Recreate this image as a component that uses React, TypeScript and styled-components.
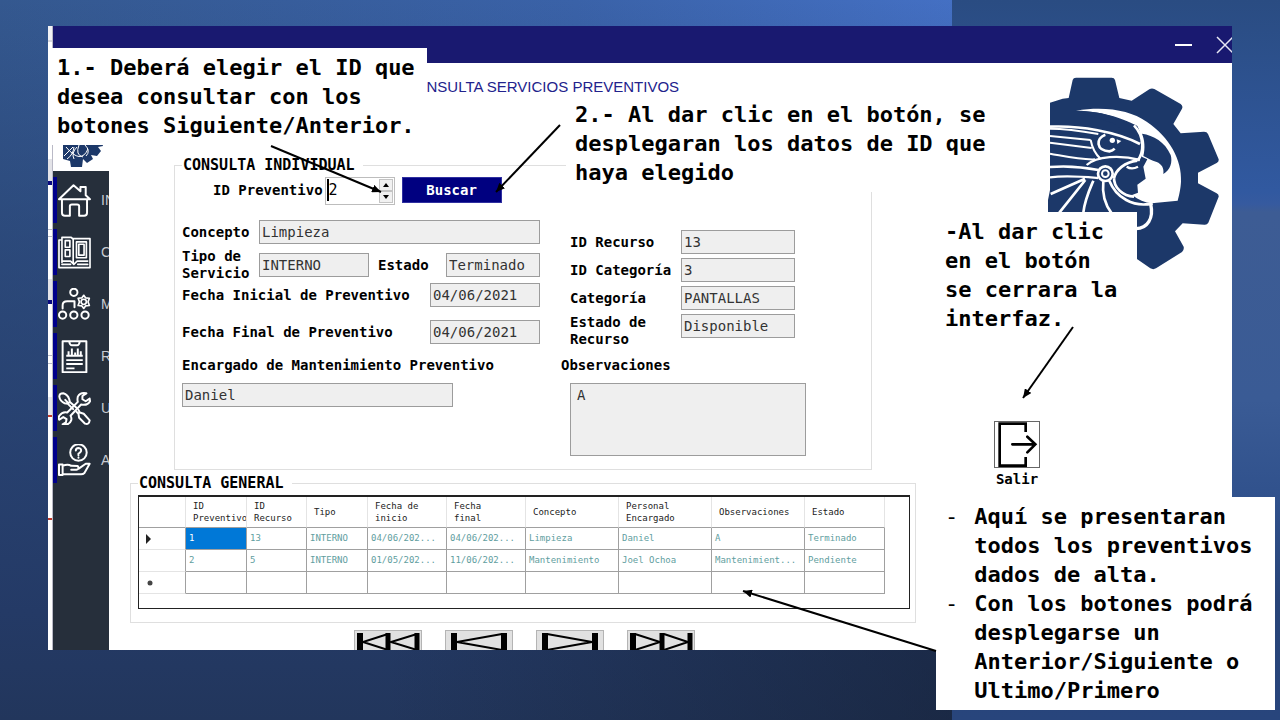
import React from 'react';
import styled, { createGlobalStyle } from 'styled-components';

const MONO = '"DejaVu Sans Mono", "Liberation Mono", monospace';

const GlobalStyle = createGlobalStyle`
  * { box-sizing: border-box; }
  body { margin: 0; font-family: ${MONO}; color: #000; }
  button, input, textarea { font-family: inherit; margin: 0; }
`;

const Slide = styled.div`
  position: relative;
  min-height: 100vh;
  padding: 26px 48px 70px;
  overflow: hidden;
  background:
    linear-gradient(to right, rgba(20, 30, 50, 0) 30%, rgba(20, 30, 50, 0.55) 74%) 0 100% / 100% 70px no-repeat,
    linear-gradient(to bottom, rgba(29, 47, 82, 0) 0%, rgba(33, 54, 96, 0.45) 35%, #243a66 85%, #22365c 100%),
    linear-gradient(to right, #34588f 0%, #3a62a8 45%, #4470c4 75%);
`;

const SideBand = styled.div`
  position: absolute;
  top: 0;
  right: 0;
  bottom: 0;
  left: 952px;
  background: linear-gradient(to bottom, #2a4c82 0, #3159a0 190px, #365a9f 204px, #3d5c94 212px, #3a5b95 400px, #30518c 500px, #284478 600px, #28457c 100%);
`;

const Screen = styled.div`
  position: relative;
  display: flex;
  background: #fff;
`;

const Backdrop = styled.div`
  flex: 0 0 5px;
  border-right: 1px solid #b9b9c6;
  background: linear-gradient(
    to bottom,
    #f2f2f5 0 14px, #d8d8de 14px 16px, #fff 16px 133px,
    #e3e3e8 133px 155px, #0a0a80 155px 159px, #fff 159px 203px,
    #b8bac8 203px 204px, #fff 204px 210px, #b8bac8 210px 211px, #fff 211px 253px,
    #e3e3e8 253px 274px, #0a0a80 274px 278px, #fff 278px 329px,
    #b8bac8 329px 330px, #fff 330px 337px, #b8bac8 337px 338px, #fff 338px 371px,
    #e8e8ec 371px 389px, #c0392b 389px 391px, #fff 391px 492px,
    #c0392b 492px 494px, #fff 494px
  );
`;

const Windowed = styled.div`
  flex: 1;
  min-width: 0;
`;

const TitleBar = styled.header`
  display: flex;
  justify-content: flex-end;
  align-items: center;
  gap: 24px;
  height: 37px;
  background: #191970;
  overflow: hidden;
`;

const TitleButton = styled.button`
  display: flex;
  padding: 0;
  border: 0;
  background: none;
  flex: none;
  &:last-child { width: 16px; }
`;

const Body = styled.div`
  display: flex;
`;

const Sidebar = styled.nav`
  flex: 0 0 56px;
  min-width: 0;
  display: flex;
  flex-direction: column;
  overflow: hidden;
`;

const SidebarLogo = styled.div`
  display: flex;
  align-items: flex-end;
  height: 108px;
  padding: 0 0 4px 10px;
`;

const Menu = styled.div`
  flex: 1;
  display: flex;
  flex-direction: column;
  gap: 6px;
  padding-top: 6px;
  background: #262f3b;
`;

const MenuItem = styled.a`
  display: flex;
  align-items: center;
  gap: 10px;
  height: 46px;
  padding-left: 1px;
  border-left: 4px solid #00008b;
  overflow: hidden;
  white-space: nowrap;
  text-decoration: none;
  color: #c9ccd2;
  font: 14px "Liberation Sans", sans-serif;
  svg { flex: none; }
`;

const Main = styled.main`
  flex: 1;
  min-width: 0;
  display: grid;
  grid-template-columns: minmax(0, 1fr) 286px;
`;

const Content = styled.div`
  padding: 14px 30px 0 21px;
`;

const Heading = styled.h1`
  margin: 0 0 58px;
  padding-left: 274px;
  font: 15px/20px "Liberation Sans", sans-serif;
  color: #22228c;
`;

const Group = styled.fieldset<{ $inset?: boolean }>`
  min-width: 0;
  margin: ${p => (p.$inset ? '0 44px 3px' : '0')};
  padding: ${p => (p.$inset ? '2px 7px 13px' : '2px 5px 13px 7px')};
  border: 1px solid #dfdfdf;
`;

const Legend = styled.legend`
  padding: 0 8px 0 1px;
  font-size: 15px;
  line-height: 20px;
  font-weight: 700;
`;

const SearchRow = styled.div`
  display: flex;
  align-items: flex-start;
  padding-left: 31px;
  margin-bottom: 15px;
`;

const Label = styled.label<{ $width?: number; $indent?: number }>`
  flex: none;
  width: ${p => (p.$width ? `${p.$width}px` : 'auto')};
  padding-left: ${p => p.$indent ?? 0}px;
  font-size: 14px;
  line-height: 17px;
  font-weight: 700;
`;

const SearchLabel = styled(Label)`
  line-height: 26px;
`;

const Stepper = styled.div`
  display: flex;
  width: 70px;
  height: 28px;
  margin: 0 7px 0 2px;
  padding: 1px;
  border: 1px solid #bdbdbd;
`;

const StepperInput = styled.input`
  flex: 1;
  min-width: 0;
  height: 22px;
  padding: 0;
  border: 0;
  border-left: 2px solid #000;
  font-size: 15px;
  appearance: textfield;
  &::-webkit-inner-spin-button { appearance: none; }
`;

const StepperArrows = styled.div`
  display: flex;
  flex-direction: column;
  width: 14px;
`;

const ArrowButton = styled.button`
  flex: 1;
  display: flex;
  align-items: center;
  justify-content: center;
  padding: 0;
  border: 1px solid #c4c4c4;
  background: #f1f1f1;
`;

const SearchButton = styled.button`
  width: 100px;
  height: 26px;
  padding: 0;
  border: 1px solid #3030a0;
  background: #000080;
  color: #fff;
  font-size: 14px;
  font-weight: 700;
`;

const Columns = styled.div`
  display: flex;
  gap: 21px;
`;

const Column = styled.div<{ $width: number }>`
  flex: 0 0 ${p => p.$width}px;
`;

const ResourceFields = styled.div`
  display: flex;
  flex-direction: column;
  gap: 4px;
  padding: 10px 11px 9px 9px;
`;

const Row = styled.div<{ $after?: number; $top?: boolean }>`
  display: flex;
  align-items: ${p => (p.$top ? 'flex-start' : 'center')};
  justify-content: space-between;
  margin-bottom: ${p => p.$after ?? 0}px;
`;

const Field = styled.input<{ $width: number }>`
  flex: none;
  width: ${p => p.$width}px;
  height: 24px;
  padding: 0 2px;
  border: 1px solid #9c9c9c;
  background: #efefef;
  color: #333;
  font-size: 14px;
`;

const Caption = styled(Label)`
  display: block;
  margin-bottom: 9px;
`;

const Notes = styled.textarea`
  display: block;
  width: 236px;
  height: 73px;
  margin-left: 9px;
  padding: 3px 6px;
  border: 1px solid #9c9c9c;
  background: #efefef;
  color: #333;
  font-size: 14px;
  resize: none;
`;

const TablePanel = styled.div`
  padding: 0 0 14px;
  border: 1px solid #222;
  border-top-width: 2px;
`;

const Table = styled.table`
  width: 745px;
  table-layout: fixed;
  border-collapse: separate;
  border-spacing: 0;
  font-size: 9px;
`;

const HeadCell = styled.th`
  height: 31px;
  padding: 0 0 0 7px;
  border-right: 1px solid #e4e4e4;
  border-bottom: 1px solid #a0a0a0;
  line-height: 12px;
  font-weight: 400;
  text-align: left;
  white-space: pre-line;
  color: #222;
  overflow: hidden;
`;

const Cell = styled.td<{ $selected?: boolean }>`
  height: 22px;
  padding: 0 0 2px 3px;
  border-right: 1px solid #a0a0a0;
  border-bottom: 1px solid #a0a0a0;
  background: ${p => (p.$selected ? '#0078d7' : '#fff')};
  color: ${p => (p.$selected ? '#fff' : '#5f9ea0')};
  white-space: nowrap;
  overflow: hidden;
`;

const RowMark = styled.th`
  height: 22px;
  padding: 0 0 0 6px;
  border-right: 1px solid #a0a0a0;
  border-bottom: 1px solid #e4e4e4;
  text-align: left;
  svg { display: block; }
`;

const Pager = styled.div`
  display: flex;
  gap: 23px;
  height: 20px;
  margin-top: 7px;
  padding-left: 224px;
  overflow: hidden;
`;

const PagerButton = styled.button`
  flex: none;
  width: 68px;
  height: 24px;
  padding: 0;
  border: 1px solid #b4b4b4;
  background: #e1e1e1;
  svg { display: block; margin: -1px; }
`;

const Aside = styled.aside`
  padding-top: 14px;
`;

const Emblem = styled.div`
  height: 193px;
  margin: 0 0 151px 102px;
`;

const Exit = styled.div`
  display: flex;
  flex-direction: column;
  align-items: center;
  gap: 3px;
  width: 46px;
  margin-left: 48px;
`;

const ExitButton = styled.button`
  width: 46px;
  height: 47px;
  padding: 0;
  border: 1px solid #666;
  background: #fff;
  svg { display: block; }
`;

const Callout = styled.div<{ $x: number; $y: number; $w: number }>`
  position: absolute;
  left: ${p => p.$x}px;
  top: ${p => p.$y}px;
  width: ${p => p.$w}px;
  padding: 5px 9px;
  background: #fff;
  font-size: 22px;
  line-height: 29px;
  font-weight: 700;
  white-space: nowrap;
  p, ul { margin: 0; padding: 0; }
  ul { list-style: none; }
  li { display: flex; gap: 16px; }
`;

const Dash = styled.span`
  font-weight: 400;
`;

const Arrows = styled.svg`
  position: absolute;
  left: 0;
  top: 0;
  width: 100%;
  height: 100%;
  pointer-events: none;
`;

const NAVY = '#1c3869';

function Logo({ width, height }: { width: number; height: number }) {
  return (
    <svg width={width} height={height} viewBox="54 51 516 579" fill="none" stroke="#fff" strokeWidth="6" strokeLinecap="butt">
      <path stroke="none" fill={NAVY} d="M60 128 L98 116 L116 114 L128 60 Q130 53 138 53 L245 53 Q253 53 255 60 L268 114 L305 122 L358 88 Q365 83 373 87 L452 132 Q460 138 456 146 L430 192 L452 220 L522 215 Q531 215 534 222 L566 298 Q567 305 560 309 L504 338 V370 L560 400 Q567 404 566 410 L535 488 Q531 495 523 494 L458 490 L435 514 L461 560 Q463 570 456 576 L378 625 Q370 630 361 625 L322 598 H54 V420 L60 390 Z" />
      <path stroke="none" fill="#fff" d="M138 152 C230 138 300 152 350 185 C420 232 456 300 453 365 C452 385 447 408 443 422 L365 430 C345 428 325 420 306 405 L324 398 L322 374 L347 356 L340 320 L352 298 L335 290 L332 222 C300 180 220 152 138 152Z" />
      <path stroke="none" fill={NAVY} d="M138 153 C220 152 290 180 322 198 C336 222 336 262 328 290 L300 296 L300 230 L250 190Z" />
      <path stroke="none" fill={NAVY} d="M336 221 C370 226 405 245 422 285 C428 305 422 330 400 342 C403 325 395 312 380 306 C365 302 352 294 340 288 C346 265 344 240 336 221Z" />
      <path d="M60 200 C150 196 260 215 330 252 M312 196 C345 230 342 280 322 302" strokeWidth="8" />
      <path d="M60 206 C110 206 160 214 205 222 M60 228 L182 240 M60 248 L185 264 M60 281 C110 290 150 300 195 298 M182 240 C186 262 196 282 212 297" strokeWidth="6" />
      <path d="M170 315 C200 288 270 284 330 300 M60 321 C110 317 165 322 205 330 M60 352 C110 345 160 350 205 354" strokeWidth="7" />
      <path d="M226 224 C196 235 198 272 238 274 Q248 272 254 266" strokeWidth="8" />
      <circle cx="247" cy="241" r="8" fill="#fff" stroke="none" />
      <path d="M260 238 L274 243 L262 252Z" fill="#fff" stroke="none" />
      <path d="M165 356 L62 402 M166 360 L88 458 M190 362 C178 390 164 420 160 458 M220 364 C216 400 226 435 245 460 M238 362 C258 412 310 444 368 430 M252 356 C256 330 285 306 322 302 M252 350 C250 385 280 408 312 410" strokeWidth="8" />
      <path d="M290 320 Q305 330 324 320" strokeWidth="7" />
      <path d="M362 432 C372 475 352 506 318 506" strokeWidth="10" />
      <circle cx="226" cy="341" r="22" fill={NAVY} strokeWidth="8" />
      <circle cx="226" cy="341" r="10" strokeWidth="6" />
    </svg>
  );
}

function MiniLogo() {
  return (
    <svg width="40" height="42" viewBox="0 0 40 42" fill="none" stroke="#fff" strokeWidth="1">
      <path fill={NAVY} stroke="none" d="M0 34 L0 8 L6 6 L8 0 H18 L20 6 L26 3 L32 8 L30 13 L38 14 L40 21 L35 22 L38 26 L34 31 L28 30 L30 34 L24 38 L20 34 L19 42 H8 L7 36Z" />
      <path d="M1 31 L10 22 M4 34 Q10 30 11 22 M11 34 Q8 28 14 22 M20 32 Q12 30 16 20 M23 31 Q28 26 22 20 M3 22 Q18 40 25 24" />
    </svg>
  );
}

const iconProps = { width: 33, height: 33, viewBox: '0 0 100 100', fill: 'none', stroke: '#fff', strokeWidth: 6, strokeLinejoin: 'round' as const, strokeLinecap: 'round' as const };

const menu = [
  {
    text: 'IN',
    icon: <svg {...iconProps}><path d="M3 46 L47 4 L68 22 V9 H84 V34 L97 46 Z M12 47 V87 Q12 96 21 96 H36 V67 Q36 62 42 62 H58 Q64 62 64 67 V96 H79 Q88 96 88 87 V47" /></svg>,
  },
  {
    text: 'C',
    icon: <svg {...iconProps} strokeWidth={5}><path d="M3 12 V96 H97 V8 H45 M3 12 H12 V80 M12 12 V4 H40 L46 10 V84 M22 14 H36 V34 H22 Z M22 42 H36 V62 H22 Z M56 18 H86 V66 H56 Z M63 25 H79 V58 H63 Z M12 76 H38 L48 86 L58 76 H90 M12 86 H38 M60 86 H90" /></svg>,
  },
  {
    text: 'M',
    icon: <svg {...iconProps}><circle cx="48" cy="13" r="11" /><path d="M14 62 V52 Q14 40 28 40 H50 V58" /><circle cx="78" cy="42" r="8" strokeWidth="5" /><path d="M78 22 L84 30 L95 31 L91 42 L95 53 L84 54 L78 62 L72 54 L61 53 L65 42 L61 31 L72 30Z" strokeWidth="5" /><circle cx="14" cy="82" r="11" /><circle cx="48" cy="82" r="11" /><circle cx="82" cy="82" r="11" /></svg>,
  },
  {
    text: 'R',
    icon: <svg {...iconProps} strokeLinecap="butt"><path d="M14 4 H86 V98 H14 Z M34 5 Q36 16 42 16 H58 Q64 16 66 5 M25 48 H75 M25 61 H75 M25 73 H75 M25 86 H50" /><path d="M32 46 V34 M42 46 V26 M52 46 V38 M60 46 V26 M69 46 V34" strokeWidth="6" /></svg>,
  },
  {
    text: 'U',
    icon: <svg {...iconProps}><path d="M4 14 Q4 4 16 4 Q30 8 34 22 L36 30 L56 48 M4 14 Q6 28 20 34 L30 36 L46 52 M22 24 L32 34 M56 60 L62 66 L64 78 L82 96 Q94 100 96 86 L78 66 L66 62 L62 54" /><path d="M96 20 L84 28 L74 22 L74 12 L86 4 Q68 0 60 14 Q58 24 60 30 L28 62 Q14 58 4 72 Q0 80 4 84 L16 76 L26 82 L24 92 L14 98 Q34 102 40 86 Q42 78 38 72 L70 38 Q90 42 97 28Z" /></svg>,
  },
  {
    text: 'A',
    icon: <svg {...iconProps}><circle cx="62" cy="26" r="25" /><path d="M54 20 Q54 12 62 12 Q71 13 70 21 Q68 27 62 29 V34 M62 41 V42" /><path d="M3 62 H14 V94 H3 Z M14 66 Q30 60 40 66 L60 67 Q66 76 56 78 H40 M64 74 L84 60 H96 L80 88 Q76 92 70 92 H14" /></svg>,
  },
];

const FirstIcon = () => (
  <svg width="68" height="24" viewBox="0 0 68 24" stroke="#000" fill="none">
    <path strokeWidth="6" d="M6 3 V22" /><path strokeWidth="5" d="M34 3 V22 M63 3 V22" />
    <path strokeWidth="2" d="M34 4 L9 12 L34 20 M63 4 L37 12 L63 20" />
  </svg>
);
const PrevIcon = () => (
  <svg width="68" height="24" viewBox="0 0 68 24" stroke="#000" fill="none">
    <path strokeWidth="6" d="M9 3 V22 M59 3 V22" /><path strokeWidth="2" d="M57 4 L12 12 L57 20" />
  </svg>
);
const NextIcon = () => (
  <svg width="68" height="24" viewBox="0 0 68 24" stroke="#000" fill="none">
    <path strokeWidth="6" d="M9 3 V22 M59 3 V22" /><path strokeWidth="2" d="M11 4 L56 12 L11 20" />
  </svg>
);
const LastIcon = () => (
  <svg width="68" height="24" viewBox="0 0 68 24" stroke="#000" fill="none">
    <path strokeWidth="6" d="M6 3 V22" /><path strokeWidth="5" d="M35 3 V22 M63 3 V22" />
    <path strokeWidth="2" d="M8 4 L33 12 L8 20 M37 4 L61 12 L37 20" />
  </svg>
);

const columns: { title: string; width: number }[] = [
  { title: 'ID\nPreventivo', width: 61 },
  { title: 'ID\nRecurso', width: 60 },
  { title: 'Tipo', width: 61 },
  { title: 'Fecha de\ninicio', width: 79 },
  { title: 'Fecha\nfinal', width: 79 },
  { title: 'Concepto', width: 93 },
  { title: 'Personal\nEncargado', width: 93 },
  { title: 'Observaciones', width: 93 },
  { title: 'Estado', width: 80 },
];

const rows = [
  ['1', '13', 'INTERNO', '04/06/202...', '04/06/202...', 'Limpieza', 'Daniel', 'A', 'Terminado'],
  ['2', '5', 'INTERNO', '01/05/202...', '11/06/202...', 'Mantenimiento', 'Joel Ochoa', 'Mantenimient...', 'Pendiente'],
  ['', '', '', '', '', '', '', '', ''],
];

const marks = [
  <svg width="8" height="10" key="current"><path d="M1 0 L6 5 L1 10Z" fill="#222" /></svg>,
  null,
  <svg width="10" height="8" key="new"><circle cx="5" cy="4" r="2.5" fill="#444" /></svg>,
];

export default function App() {
  return (
    <Slide>
      <GlobalStyle />
      <SideBand />
      <Screen>
        <Backdrop />
        <Windowed>
          <TitleBar>
            <TitleButton aria-label="Minimizar">
              <svg width="18" height="18" stroke="#fff" strokeWidth="2"><path d="M1 9 H18" /></svg>
            </TitleButton>
            <TitleButton aria-label="Cerrar">
              <svg width="18" height="18" stroke="#e8e8f4" strokeWidth="1.5"><path d="M1 1 L17 17 M17 1 L1 17" /></svg>
            </TitleButton>
          </TitleBar>
          <Body>
            <Sidebar>
              <SidebarLogo><MiniLogo /></SidebarLogo>
              <Menu>
                {menu.map(item => (
                  <MenuItem href="#" key={item.text}>{item.icon}<span>{item.text}</span></MenuItem>
                ))}
              </Menu>
            </Sidebar>
            <Main>
              <Content>
                <Heading>CONSULTA SERVICIOS PREVENTIVOS</Heading>
                <Group $inset>
                  <Legend>CONSULTA INDIVIDUAL</Legend>
                  <SearchRow>
                    <SearchLabel htmlFor="idp">ID Preventivo</SearchLabel>
                    <Stepper>
                      <StepperInput id="idp" type="number" defaultValue={2} />
                      <StepperArrows>
                        <ArrowButton aria-label="Siguiente"><svg width="6" height="4"><path d="M0 4 L3 0 L6 4Z" /></svg></ArrowButton>
                        <ArrowButton aria-label="Anterior"><svg width="6" height="4"><path d="M0 0 L3 4 L6 0Z" /></svg></ArrowButton>
                      </StepperArrows>
                    </Stepper>
                    <SearchButton>Buscar</SearchButton>
                  </SearchRow>
                  <Columns>
                    <Column $width={358}>
                      <Row $after={4}>
                        <Label htmlFor="concepto">Concepto</Label>
                        <Field id="concepto" $width={281} defaultValue="Limpieza" readOnly />
                      </Row>
                      <Row $after={1}>
                        <Label htmlFor="tipo" $width={77}>Tipo de<br />Servicio</Label>
                        <Field id="tipo" $width={110} defaultValue="INTERNO" readOnly />
                        <Label htmlFor="estado" $width={77} $indent={9}>Estado</Label>
                        <Field id="estado" $width={94} defaultValue="Terminado" readOnly />
                      </Row>
                      <Row $after={13}>
                        <Label htmlFor="fini">Fecha Inicial de Preventivo</Label>
                        <Field id="fini" $width={110} defaultValue="04/06/2021" readOnly />
                      </Row>
                      <Row $after={13}>
                        <Label htmlFor="ffin">Fecha Final de Preventivo</Label>
                        <Field id="ffin" $width={110} defaultValue="04/06/2021" readOnly />
                      </Row>
                      <Caption htmlFor="enc">Encargado de Mantenimiento Preventivo</Caption>
                      <Field id="enc" $width={271} defaultValue="Daniel" readOnly />
                    </Column>
                    <Column $width={245}>
                      <ResourceFields>
                        <Row>
                          <Label htmlFor="idr">ID Recurso</Label>
                          <Field id="idr" $width={114} defaultValue="13" readOnly />
                        </Row>
                        <Row>
                          <Label htmlFor="idc">ID Categoría</Label>
                          <Field id="idc" $width={114} defaultValue="3" readOnly />
                        </Row>
                        <Row>
                          <Label htmlFor="cat">Categoría</Label>
                          <Field id="cat" $width={114} defaultValue="PANTALLAS" readOnly />
                        </Row>
                        <Row $top>
                          <Label htmlFor="er">Estado de<br />Recurso</Label>
                          <Field id="er" $width={114} defaultValue="Disponible" readOnly />
                        </Row>
                      </ResourceFields>
                      <Caption htmlFor="obs">Observaciones</Caption>
                      <Notes id="obs" defaultValue="A" readOnly />
                    </Column>
                  </Columns>
                </Group>
                <Group>
                  <Legend>CONSULTA GENERAL</Legend>
                  <TablePanel>
                    <Table>
                      <colgroup>
                        <col width={47} />
                        {columns.map(c => <col key={c.title} width={c.width} />)}
                      </colgroup>
                      <thead>
                        <tr>
                          <HeadCell aria-label="Fila" />
                          {columns.map(c => <HeadCell key={c.title}>{c.title}</HeadCell>)}
                        </tr>
                      </thead>
                      <tbody>
                        {rows.map((r, i) => (
                          <tr key={i}>
                            <RowMark>{marks[i]}</RowMark>
                            {r.map((v, j) => <Cell key={j} $selected={i === 0 && j === 0}>{v}</Cell>)}
                          </tr>
                        ))}
                      </tbody>
                    </Table>
                  </TablePanel>
                </Group>
                <Pager>
                  <PagerButton aria-label="Primero"><FirstIcon /></PagerButton>
                  <PagerButton aria-label="Anterior"><PrevIcon /></PagerButton>
                  <PagerButton aria-label="Siguiente"><NextIcon /></PagerButton>
                  <PagerButton aria-label="Último"><LastIcon /></PagerButton>
                </Pager>
              </Content>
              <Aside>
                <Emblem><Logo width={172} height={193} /></Emblem>
                <Exit>
                  <ExitButton id="salir" aria-labelledby="salir-label">
                    <svg width="44" height="45" viewBox="223 336 132 135" fill="none" stroke="#000" strokeWidth="8">
                      <path d="M315 366 V341 H237 V467 H315 V441" />
                      <path d="M275 403 H342 M320 380 L344 403 L320 427" strokeLinecap="round" />
                    </svg>
                  </ExitButton>
                  <Label id="salir-label" htmlFor="salir">Salir</Label>
                </Exit>
              </Aside>
            </Main>
          </Body>
        </Windowed>
      </Screen>

      <Callout $x={48} $y={48} $w={379}>
        <p>1.- Deberá elegir el ID que<br />desea consultar con los<br />botones Siguiente/Anterior.</p>
      </Callout>
      <Callout $x={566} $y={95} $w={440}>
        <p>2.- Al dar clic en el botón, se<br />desplegaran los datos de ID que<br />haya elegido</p>
      </Callout>
      <Callout $x={936} $y={212} $w={201}>
        <p>-Al dar clic<br />en el botón<br />se cerrara la<br />interfaz.</p>
      </Callout>
      <Callout $x={936} $y={497} $w={339}>
        <ul>
          <li><Dash>-</Dash><span>Aquí se presentaran<br />todos los preventivos<br />dados de alta.</span></li>
          <li><Dash>-</Dash><span>Con los botones podrá<br />desplegarse un<br />Anterior/Siguiente o<br />Ultimo/Primero</span></li>
        </ul>
      </Callout>

      <Arrows stroke="#000" strokeWidth="2">
        <defs>
          <marker id="tip" markerUnits="userSpaceOnUse" markerWidth="10" markerHeight="8" refX="9" refY="4" orient="auto">
            <path d="M0 0 L9 4 L0 8Z" stroke="none" />
          </marker>
        </defs>
        <path d="M271 146 L381 192" markerEnd="url(#tip)" />
        <path d="M560 125 L496 192" markerEnd="url(#tip)" />
        <path d="M1073 327 L1023 398" markerEnd="url(#tip)" />
        <path d="M936 651 L743 591" markerEnd="url(#tip)" />
      </Arrows>
    </Slide>
  );
}
